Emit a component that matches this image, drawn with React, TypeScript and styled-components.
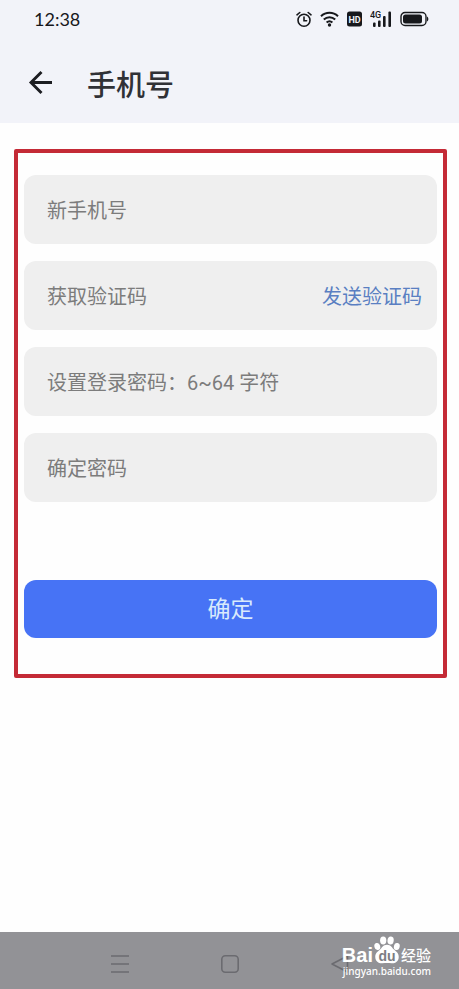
import React from "react";
import styled, { createGlobalStyle } from "styled-components";

const GlobalStyle = createGlobalStyle`
  * { box-sizing: border-box; }
  body { margin: 0; background: #fefefe; }
  body, button, input {
    font-family: Roboto, "Noto Sans CJK SC", sans-serif;
  }
`;

const Screen = styled.div`
  display: flex;
  flex-direction: column;
  min-height: 100vh;
`;

const TopArea = styled.header`
  background: #f2f3f9;
  padding-bottom: 20px;
`;

const StatusBar = styled.div`
  display: flex;
  align-items: center;
  justify-content: space-between;
  height: 38px;
  padding: 0 30px 0 34px;
`;

const Clock = styled.time`
  font: 18px/24px Lato, sans-serif;
  color: #17181c;
`;

const StatusIcons = styled.div`
  display: flex;
  align-items: center;
  gap: 8px;
  color: #17181c;
  svg { display: block; }
`;

const TitleBar = styled.div`
  display: flex;
  align-items: center;
  gap: 33px;
  height: 65px;
  padding: 24px 26px 0;
`;

const BackButton = styled.button`
  display: flex;
  border: 0;
  padding: 0;
  background: none;
  color: #1c1d21;
`;

const Title = styled.h1`
  margin: 0;
  font-family: "Noto Sans CJK SC", sans-serif;
  font-size: 29px;
  line-height: 40px;
  font-weight: 500;
  color: #303136;
`;

const Content = styled.main`
  flex: 1;
  padding: 26px 12px 26px 14px;
`;

const Form = styled.form`
  display: flex;
  flex-direction: column;
  gap: 17px;
  padding: 22px 6px 36px;
  border: 4px solid #c42a36;
  border-radius: 2px;
`;

const Field = styled.div`
  display: flex;
  align-items: center;
  height: 69px;
  padding: 3px 15px 0 23px;
  border-radius: 12px;
  background: #efefef;
`;

const Input = styled.input`
  flex: 1;
  min-width: 0;
  height: 100%;
  border: 0;
  padding: 0;
  outline: 0;
  background: none;
  font-size: 20px;
  color: #333;
  &::placeholder { color: #7c7c7c; opacity: 1; }
`;

const SendCode = styled.button`
  border: 0;
  padding: 0;
  background: none;
  font-size: 20px;
  line-height: 30px;
  color: #5a7fc2;
`;

const Submit = styled.button`
  height: 58px;
  margin-top: 61px;
  border: 0;
  border-radius: 12px;
  padding: 2px 0 0;
  background: #4773f5;
  font-size: 23px;
  line-height: 34px;
  color: #d9eafc;
`;

const NavBar = styled.nav`
  position: relative;
  display: flex;
  align-items: center;
  justify-content: center;
  gap: 90px;
  height: 57px;
  padding-top: 6px;
  background: #929296;
`;

const NavButton = styled.button`
  display: flex;
  border: 0;
  padding: 0;
  background: none;
  color: #6b6b70;
`;

const Watermark = styled.div`
  position: absolute;
  right: 28px;
  bottom: 11px;
  color: #fff;
`;

const Brand = styled.div`
  display: flex;
  align-items: flex-end;
  height: 30px;
`;

const BrandLatin = styled.span`
  font: 700 20px/18px "Liberation Sans", sans-serif;
`;

const BrandHan = styled.span`
  font: 500 15px/18px "Noto Sans CJK SC", sans-serif;
`;

const Address = styled.div`
  font: 500 10px/14px "Noto Sans", sans-serif;
  text-align: right;
`;

const AlarmIcon = () => (
  <svg width="16" height="17" viewBox="0 0 16 17" fill="none" stroke="currentColor" strokeWidth="1.6" strokeLinecap="round" aria-hidden="true">
    <circle cx="8" cy="9.3" r="6" />
    <path d="M1 3.8 3.8 1.5M15 3.8 12.2 1.5M8 6v3.8h2.6" />
  </svg>
);

const WifiIcon = () => (
  <svg width="19" height="16" viewBox="0 0 19 16" fill="none" stroke="currentColor" strokeWidth="2" aria-hidden="true">
    <path d="M1 5.3C5.8.7 13.2.7 18 5.3M3.8 8.6c3.3-3.1 8.1-3.1 11.4 0M6.6 11.5c1.7-1.5 4.1-1.5 5.8 0" />
    <circle cx="9.5" cy="14" r="1.7" fill="currentColor" stroke="none" />
  </svg>
);

const HdIcon = () => (
  <svg width="15" height="16" viewBox="0 0 15 16" aria-label="HD">
    <rect y="0.5" width="15" height="15" rx="2.5" fill="currentColor" />
    <text x="7.5" y="11.5" textAnchor="middle" fontFamily="Roboto, sans-serif" fontWeight="700" fontSize="9" fill="#f2f3f9">HD</text>
  </svg>
);

const SignalIcon = () => (
  <svg width="22" height="18" viewBox="0 0 22 18" aria-label="4G" fill="currentColor">
    <text x="0" y="8" fontFamily="Roboto, sans-serif" fontWeight="500" fontSize="9">4G</text>
    <rect x="3" y="12.5" width="2.6" height="4.5" rx="1" />
    <rect x="8" y="10.5" width="2.6" height="6.5" rx="1" />
    <rect x="13" y="6" width="2.6" height="11" rx="1" />
    <rect x="18.4" y="1.5" width="2.6" height="15.5" rx="1" />
  </svg>
);

const BatteryIcon = () => (
  <svg width="29" height="16" viewBox="0 0 29 16" aria-hidden="true">
    <rect x="1" y="1.5" width="25" height="13" rx="4" fill="none" stroke="currentColor" strokeWidth="1.4" />
    <rect x="3" y="3.5" width="19" height="9" rx="2.5" fill="currentColor" />
    <path d="M27 5.5c1.8.7 1.8 4.3 0 5z" fill="currentColor" />
  </svg>
);

const BackIcon = () => (
  <svg width="28" height="26" viewBox="0 0 28 26" fill="none" stroke="currentColor" strokeWidth="2.9" aria-hidden="true">
    <path d="M26 12.5H5M15.5 2 5 12.5 15.5 23" />
  </svg>
);

const PawIcon = () => (
  <svg width="28" height="28" viewBox="0 0 28 28" fill="#fff" aria-label="du">
    <ellipse cx="4.3" cy="10.5" rx="2.9" ry="3.6" transform="rotate(-15 4.3 10.5)" />
    <ellipse cx="10.2" cy="4.5" rx="3.1" ry="4" />
    <ellipse cx="17.6" cy="4.5" rx="3.1" ry="4" transform="rotate(8 17.6 4.5)" />
    <ellipse cx="23.8" cy="10.5" rx="2.9" ry="3.6" transform="rotate(12 23.8 10.5)" />
    <path d="M14 8.800c-4 0-5 3-7.200 5C4.500 15.800 2 17.200 2.300 21.500c.3 4.300 3.700 6 7 5.700 3.200-.3 6.200-.3 9.400 0 3.300.3 6.700-1.400 7-5.700.3-4.300-2.200-5.700-4.500-7.700-2.200-2-3.200-5-7.200-5Z" />
    <text x="14" y="24.500" textAnchor="middle" fontFamily="Liberation Sans, sans-serif" fontWeight="700" fontSize="14" fill="#7c7c82">du</text>
  </svg>
);

const fields = [
  { name: "phone", label: "新手机号", type: "tel" },
  { name: "code", label: "获取验证码", type: "text", action: "发送验证码" },
  { name: "password", label: "设置登录密码：6~64 字符", type: "password" },
  { name: "confirm", label: "确定密码", type: "password" },
];

export default function App() {
  return (
    <Screen>
      <GlobalStyle />
      <TopArea>
        <StatusBar>
          <Clock>12:38</Clock>
          <StatusIcons>
            <AlarmIcon />
            <WifiIcon />
            <HdIcon />
            <SignalIcon />
            <BatteryIcon />
          </StatusIcons>
        </StatusBar>
        <TitleBar>
          <BackButton type="button" aria-label="返回"><BackIcon /></BackButton>
          <Title>手机号</Title>
        </TitleBar>
      </TopArea>
      <Content>
        <Form onSubmit={(e) => e.preventDefault()}>
          {fields.map((f) => (
            <Field key={f.name}>
              <Input name={f.name} type={f.type} placeholder={f.label} aria-label={f.label} />
              {f.action && <SendCode type="button">{f.action}</SendCode>}
            </Field>
          ))}
          <Submit type="submit">确定</Submit>
        </Form>
      </Content>
      <NavBar>
        <NavButton type="button" aria-label="最近任务">
          <svg width="20" height="20" viewBox="0 0 20 20" fill="none" stroke="currentColor" strokeWidth="1.6">
            <path d="M1 2h18M1 10h18M1 18h18" />
          </svg>
        </NavButton>
        <NavButton type="button" aria-label="主页">
          <svg width="20" height="20" viewBox="0 0 20 20" fill="none" stroke="currentColor" strokeWidth="1.6">
            <rect x="1.8" y="1.8" width="16.4" height="16.4" rx="3.5" />
          </svg>
        </NavButton>
        <NavButton type="button" aria-label="后退">
          <svg width="20" height="20" viewBox="0 0 20 20" fill="none" stroke="currentColor" strokeWidth="1.6" strokeLinejoin="round">
            <path d="M17.5 2 2 10l15.5 8z" />
          </svg>
        </NavButton>
        <Watermark>
          <Brand>
            <BrandLatin>Bai</BrandLatin>
            <PawIcon />
            <BrandHan>经验</BrandHan>
          </Brand>
          <Address>jingyan.baidu.com</Address>
        </Watermark>
      </NavBar>
    </Screen>
  );
}
